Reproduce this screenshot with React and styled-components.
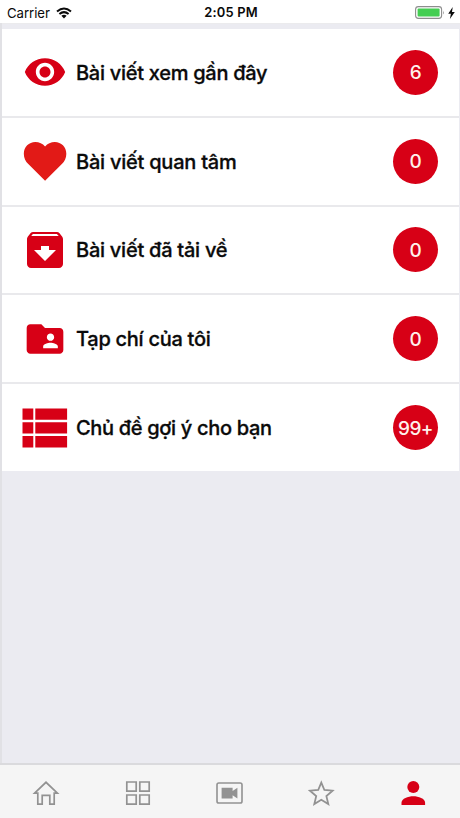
import React from 'react';
import styled, { createGlobalStyle } from 'styled-components';

const RED = '#d70016';
const GREY = '#929292';

const GlobalStyle = createGlobalStyle`
  * { box-sizing: border-box; }
  body { margin: 0; background: #ebebf1; }
`;

const Screen = styled.div`
  width: 460px;
  height: 818px;
  display: flex;
  flex-direction: column;
  overflow: hidden;
  background: #ebebf1;
  color: #0a0a0a;
  font-family: Inter, "Liberation Sans", sans-serif;
`;

const StatusBar = styled.header`
  height: 23px;
  flex: none;
  display: grid;
  grid-template-columns: 1fr auto 1fr;
  align-items: center;
  padding: 1px 5px 0 7px;
  background: #fff;
  line-height: 22px;
`;

const Carrier = styled.div`
  display: flex;
  align-items: center;
  gap: 6px;
  font-size: 13.2px;
  letter-spacing: -0.05px;
`;

const Clock = styled.div`
  padding-top: 1px;
  font-size: 12.9px;
  font-weight: 600;
  letter-spacing: 0.2px;
`;

const Power = styled.div`
  display: flex;
  align-items: center;
  justify-content: flex-end;
  gap: 3px;
`;

const Content = styled.main`
  flex: 1;
  padding: 6px 1px 0 2px;
  box-shadow: inset 2px 0 0 #e1e1e5, inset 0 1px 0 #ebebed;
`;

const List = styled.div`
  display: flex;
  flex-direction: column;
  gap: 2px;
  height: 442px;
  background: #e9e9ec;
`;

const Row = styled.div`
  flex: 1;
  display: flex;
  align-items: center;
  padding: 0 21px 0 20px;
  background: #fff;
`;

const IconSlot = styled.div`
  width: 46px;
  flex: none;
  display: flex;
  align-items: center;
  justify-content: center;

  svg { flex: none; display: block; }
`;

const Label = styled.div`
  flex: 1;
  margin-left: 8px;
  padding-top: 1px;
  font-size: 20px;
  line-height: 28px;
  font-weight: 500;
  -webkit-text-stroke: 0.3px currentColor;
  letter-spacing: ${(p) => p.$tracking}px;
  white-space: nowrap;
`;

const Badge = styled.div`
  width: 45px;
  height: 45px;
  border-radius: 50%;
  display: flex;
  align-items: center;
  justify-content: center;
  padding-top: 1px;
  background: ${RED};
  color: #fff1ec;
  font-size: 19px;
  font-weight: 500;
  letter-spacing: -0.5px;
`;

const TabBar = styled.nav`
  height: 55px;
  flex: none;
  display: grid;
  grid-template-columns: repeat(5, 1fr);
  border-top: 2px solid #dadadd;
  background: #f5f5f5;
`;

const Tab = styled.div`
  display: flex;
  justify-content: center;
  padding-top: 14px;
  color: ${(p) => (p.$active ? RED : GREY)};

  svg { display: block; }
`;

const Glyph = ({ size, d, color = RED }) => (
  <svg width={size} height={size} viewBox="0 0 24 24" fill={color}>
    <path d={d} />
  </svg>
);

const ListGlyph = () => (
  <svg width="46" height="40" viewBox="0 0 46 40" fill={RED}>
    <path d="M.5.5h10.8v11.2H.5zM13.3.5h31.8v11.2H13.3zM.5 14.3h10.8v11.2H.5zM13.3 14.3h31.8v11.2H13.3zM.5 28.1h10.8v11.3H.5zM13.3 28.1h31.8v11.3H13.3z" />
  </svg>
);

const rows = [
  {
    label: 'Bài viết xem gần đây', count: '6', tracking: -0.28,
    icon: <Glyph size={44} d="M12 4.5C7 4.5 2.73 7.61 1 12c1.73 4.39 6 7.5 11 7.5s9.27-3.11 11-7.5c-1.73-4.39-6-7.5-11-7.5zM12 17c-2.76 0-5-2.24-5-5s2.24-5 5-5 5 2.24 5 5-2.24 5-5 5zm0-8c-1.66 0-3 1.34-3 3s1.34 3 3 3 3-1.34 3-3-1.34-3-3-3z" />,
  },
  {
    label: 'Bài viết quan tâm', count: '0', tracking: -0.23,
    icon: <Glyph size={51} color="#e21a17" d="M11.8 21 3.9 13.2C2.6 11.9 1.8 10.2 1.8 8.3 1.8 5.2 4.2 2.8 7.2 2.8c1.8 0 3.5.8 4.6 2.1C12.9 3.6 14.6 2.8 16.4 2.8c3 0 5.4 2.4 5.4 5.5 0 1.9-.8 3.6-2.1 4.9z" />,
  },
  {
    label: 'Bài viết đã tải về', count: '0', tracking: -0.25,
    icon: <Glyph size={48} d="M20.54 5.23l-1.39-1.68C18.88 3.21 18.47 3 18 3H6c-.47 0-.88.21-1.16.55L3.46 5.23C3.17 5.57 3 6.02 3 6.5V19c0 1.1.9 2 2 2h14c1.1 0 2-.9 2-2V6.5c0-.48-.17-.93-.46-1.27zM12 17.5L6.5 12H10v-2h4v2h3.5L12 17.5zM5.12 5l.81-1h12l.94 1H5.12z" />,
  },
  {
    label: 'Tạp chí của tôi', count: '0', tracking: -0.27,
    icon: <Glyph size={44} d="M20 6h-8l-2-2H4c-1.1 0-1.99.9-1.99 2L2 18c0 1.1.9 2 2 2h16c1.1 0 2-.9 2-2V8c0-1.1-.9-2-2-2zm-5 3c1.1 0 2 .9 2 2s-.9 2-2 2-2-.9-2-2 .9-2 2-2zm4 8h-8v-1c0-1.33 2.67-2 4-2s4 .67 4 2v1z" />,
  },
  { label: 'Chủ đề gợi ý cho bạn', count: '99+', tracking: -0.32, icon: <ListGlyph /> },
];

const Wifi = () => (
  <svg width="16" height="12" viewBox="0 0 16 12" fill="none" stroke="#0a0a0a" strokeWidth="2">
    <path d="M1 4.5Q8-1.5 15 4.5M3.4 7.1Q8 3.2 12.6 7.1" />
    <path d="M5.4 8.7Q8 6.7 10.6 8.7L8 11.4z" fill="#0a0a0a" stroke="none" />
  </svg>
);

const Battery = () => (
  <svg width="30" height="13" viewBox="0 0 30 13">
    <rect x=".6" y=".6" width="26" height="11.8" rx="2.8" fill="#fff" stroke="#8d8d8d" strokeWidth="1.1" />
    <rect x="2.6" y="2.5" width="22" height="8" rx="1" fill="#44ce52" />
    <path d="M28 4.5q1.4 2 0 4z" fill="#8d8d8d" />
  </svg>
);

const Bolt = () => (
  <svg width="7" height="12" viewBox="0 0 7 12" fill="#0a0a0a">
    <path d="M4.7 0 .2 6.7h2.7L1.9 12 6.8 4.9H4z" />
  </svg>
);

const tabs = [
  <svg key="home" width="28" height="28" viewBox="0 0 28 28" fill="none" stroke="currentColor" strokeWidth="1.7">
    <path d="M2.6 14.2 14 3.3l11.4 10.9h-3.2v10.9h-4.4v-8.7h-7.6v8.7H5.8V14.2z" />
  </svg>,
  <svg key="grid" width="28" height="28" viewBox="0 0 28 28" fill="none" stroke="currentColor" strokeWidth="1.7">
    <path d="M2.8 3h9.4v9.2H2.8zM15.8 3h9.4v9.2h-9.4zM2.8 16h9.4v9.2H2.8zM15.8 16h9.4v9.2h-9.4z" />
  </svg>,
  <svg key="video" width="28" height="28" viewBox="0 0 28 28">
    <rect x="1" y="4" width="25" height="20" rx="1.8" fill="none" stroke="currentColor" strokeWidth="1.6" />
    <path d="M5.6 8.8h11v3.3l4.8-3.3v10.8l-4.8-3.3v3.3h-11z" fill="currentColor" />
  </svg>,
  <svg key="star" width="28" height="28" viewBox="0 0 28 28" fill="none" stroke="currentColor" strokeWidth="1.8">
    <path d="m13.3 3.6 3.1 7.4 8.2.7-6.2 5.4 1.9 7.9-7-4.2-7 4.2 1.9-7.9L2 11.7l8.2-.7z" />
  </svg>,
  <svg key="person" width="28" height="28" viewBox="0 0 28 28" fill="currentColor">
    <circle cx="13.3" cy="8.1" r="6" />
    <path d="M1.5 25.9v-2.2c0-4.3 6.6-6.5 11.8-6.5s11.8 2.2 11.8 6.5v2.2z" />
  </svg>,
];

export default function App() {
  return (
    <Screen>
      <GlobalStyle />
      <StatusBar>
        <Carrier>Carrier <Wifi /></Carrier>
        <Clock>2:05 PM</Clock>
        <Power><Battery /><Bolt /></Power>
      </StatusBar>
      <Content>
        <List>
          {rows.map((row) => (
            <Row key={row.label}>
              <IconSlot>{row.icon}</IconSlot>
              <Label $tracking={row.tracking}>{row.label}</Label>
              <Badge>{row.count}</Badge>
            </Row>
          ))}
        </List>
      </Content>
      <TabBar>
        {tabs.map((icon, i) => <Tab key={icon.key} $active={i === 4}>{icon}</Tab>)}
      </TabBar>
    </Screen>
  );
}
